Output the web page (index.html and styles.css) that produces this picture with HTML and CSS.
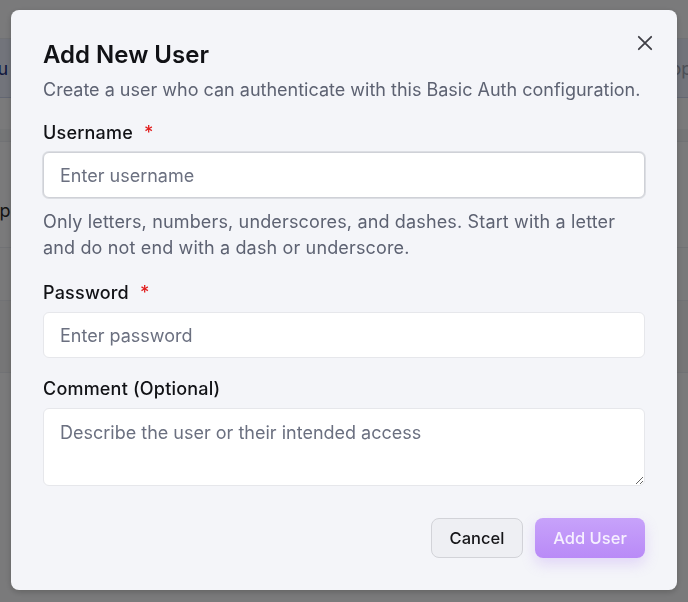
FILE: index.html
```html
<!DOCTYPE html>
<html>
<head>
<meta charset="utf-8">
<link rel="stylesheet" href="styles.css">
</head>
<body>
<div class="page">
  <div class="row head"></div>
  <div class="row active"><span class="cell-l">Ru</span><span class="cell-r">Copy</span></div>
  <div class="row gap"></div>
  <div class="row band"></div>
  <div class="row tall"><span class="cell-l">Ap</span></div>
  <div class="row mid"></div>
  <div class="row mid2"></div>
  <div class="row rest"></div>
</div>
<div class="overlay">
  <div class="modal" role="dialog">
    <button class="close" aria-label="Close">
      <svg width="20" height="20" viewBox="0 0 20 20"><path d="M3.8 3.8 16.2 16.2M16.2 3.8 3.8 16.2" stroke="#3f3f46" stroke-width="1.8" stroke-linecap="round" fill="none"/></svg>
    </button>
    <h2 class="title">Add New User</h2>
    <p class="subtitle">Create a user who can authenticate with this Basic Auth configuration.</p>
    <div class="field">
      <label class="label">Username <span class="req">*</span></label>
      <input class="input focused" type="text" placeholder="Enter username">
      <p class="help">Only letters, numbers, underscores, and dashes. Start with a letter and do not end with a dash or underscore.</p>
    </div>
    <div class="field second">
      <label class="label">Password <span class="req">*</span></label>
      <input class="input" type="password" placeholder="Enter password">
    </div>
    <div class="field third">
      <label class="label">Comment (Optional)</label>
      <textarea class="input area" placeholder="Describe the user or their intended access"></textarea>
    </div>
    <div class="actions">
      <button class="btn cancel">Cancel</button>
      <button class="btn primary">Add User</button>
    </div>
  </div>
</div>
</body>
</html>
```
FILE: styles.css
```css
* { box-sizing: border-box; }
html, body { margin: 0; padding: 0; }
body {
  width: 688px;
  height: 602px;
  overflow: hidden;
  font-family: Inter, "Noto Sans", sans-serif;
  background: #f5f5f6;
}
.page { display: flex; flex-direction: column; }
.row { display: flex; justify-content: space-between; align-items: center; }
.head { height: 39px; background: #f5f5f6; border-bottom: 1px solid #e3e5ea; }
.active { height: 59px; background: #e4e9f6; border-bottom: 1px solid #c7cfe6; }
.cell-l { margin-left: -14px; font-size: 18px; color: #1e2f7a; }
.cell-r { margin-right: -14px; font-size: 18px; color: #9aa0ae; }
.gap { height: 31px; background: #f5f5f6; }
.band { height: 12px; background: #ebecef; }
.tall {
  height: 107px;
  background: #f5f5f6;
  border-top: 1px solid #e3e5ea;
  border-bottom: 1px solid #e3e5ea;
  align-items: flex-start;
  padding-top: 58px;
}
.tall .cell-l { color: #2a2a2a; margin-left: -13px; }
.mid { height: 53px; background: #f3f3f4; border-bottom: 1px solid #e3e5ea; }
.mid2 { height: 72px; background: #ededee; border-bottom: 1px solid #e3e5ea; }
.rest { flex: 1; height: 250px; background: #f1f1f2; }

.overlay {
  position: fixed;
  inset: 0;
  background: rgba(0, 0, 0, 0.5);
  display: flex;
  align-items: flex-start;
  justify-content: center;
  padding-top: 10px;
}
.modal {
  position: relative;
  width: 666px;
  background: #f4f5f9;
  border-radius: 8px;
  padding: 31px 32px 32px;
  display: flex;
  flex-direction: column;
  box-shadow: 0 2px 6px rgba(0,0,0,0.2);
}
.close {
  position: absolute;
  top: 23px;
  right: 22px;
  width: 20px;
  height: 20px;
  padding: 0;
  border: 0;
  background: none;
  display: flex;
}
.title {
  margin: 0;
  font-size: 24px;
  line-height: 28px;
  font-weight: 600;
  color: #111216;
}
.subtitle {
  margin: 8px 0 0;
  font-size: 18px;
  line-height: 26px;
  color: #5d6272;
}
.field { display: flex; flex-direction: column; margin-top: 17px; }
.field.second { margin-top: 19px; }
.field.third { margin-top: 18px; }
.label {
  padding-top: 1px;
  font-size: 18px;
  line-height: 24px;
  font-weight: 500;
  color: #111216;
  letter-spacing: 0.2px;
}
.req { color: #e11d1d; margin-left: 6px; }
.input {
  margin-top: 7px;
  width: 602px;
  height: 46px;
  border: 1px solid #e6e7eb;
  border-radius: 6px;
  background: #ffffff;
  padding: 0 16px;
  font-family: Inter, "Noto Sans", sans-serif;
  font-size: 18px;
  color: #111216;
  outline: none;
}
.input.focused {
  border: 1px solid #cfd1d7;
  box-shadow: 0 0 0 1px #dcdee3;
}
.input::placeholder { color: #6b7080; }
.area {
  height: 78px;
  padding: 12px 16px;
  line-height: 24px;
  resize: vertical;
}
.help {
  margin: 11px 0 0;
  font-size: 18px;
  line-height: 26px;
  color: #5d6272;
  letter-spacing: 0.15px;
}
.actions {
  margin-top: 32px;
  display: flex;
  justify-content: flex-end;
  gap: 12px;
}
.btn {
  height: 40px;
  border-radius: 8px;
  font-family: Inter, "Noto Sans", sans-serif;
  font-size: 16.5px;
  font-weight: 500;
  padding: 0;
  display: flex;
  align-items: center;
  justify-content: center;
  white-space: nowrap;
}
.cancel {
  width: 92px;
  background: #eeeff3;
  border: 1px solid #d2d3d8;
  color: #151518;
}
.primary {
  width: 110px;
  border: 0;
  color: #f6f0ff;
  background: linear-gradient(#c7a2fa, #b98af7);
  box-shadow: 0 6px 14px rgba(167, 120, 245, 0.25);
}
```
